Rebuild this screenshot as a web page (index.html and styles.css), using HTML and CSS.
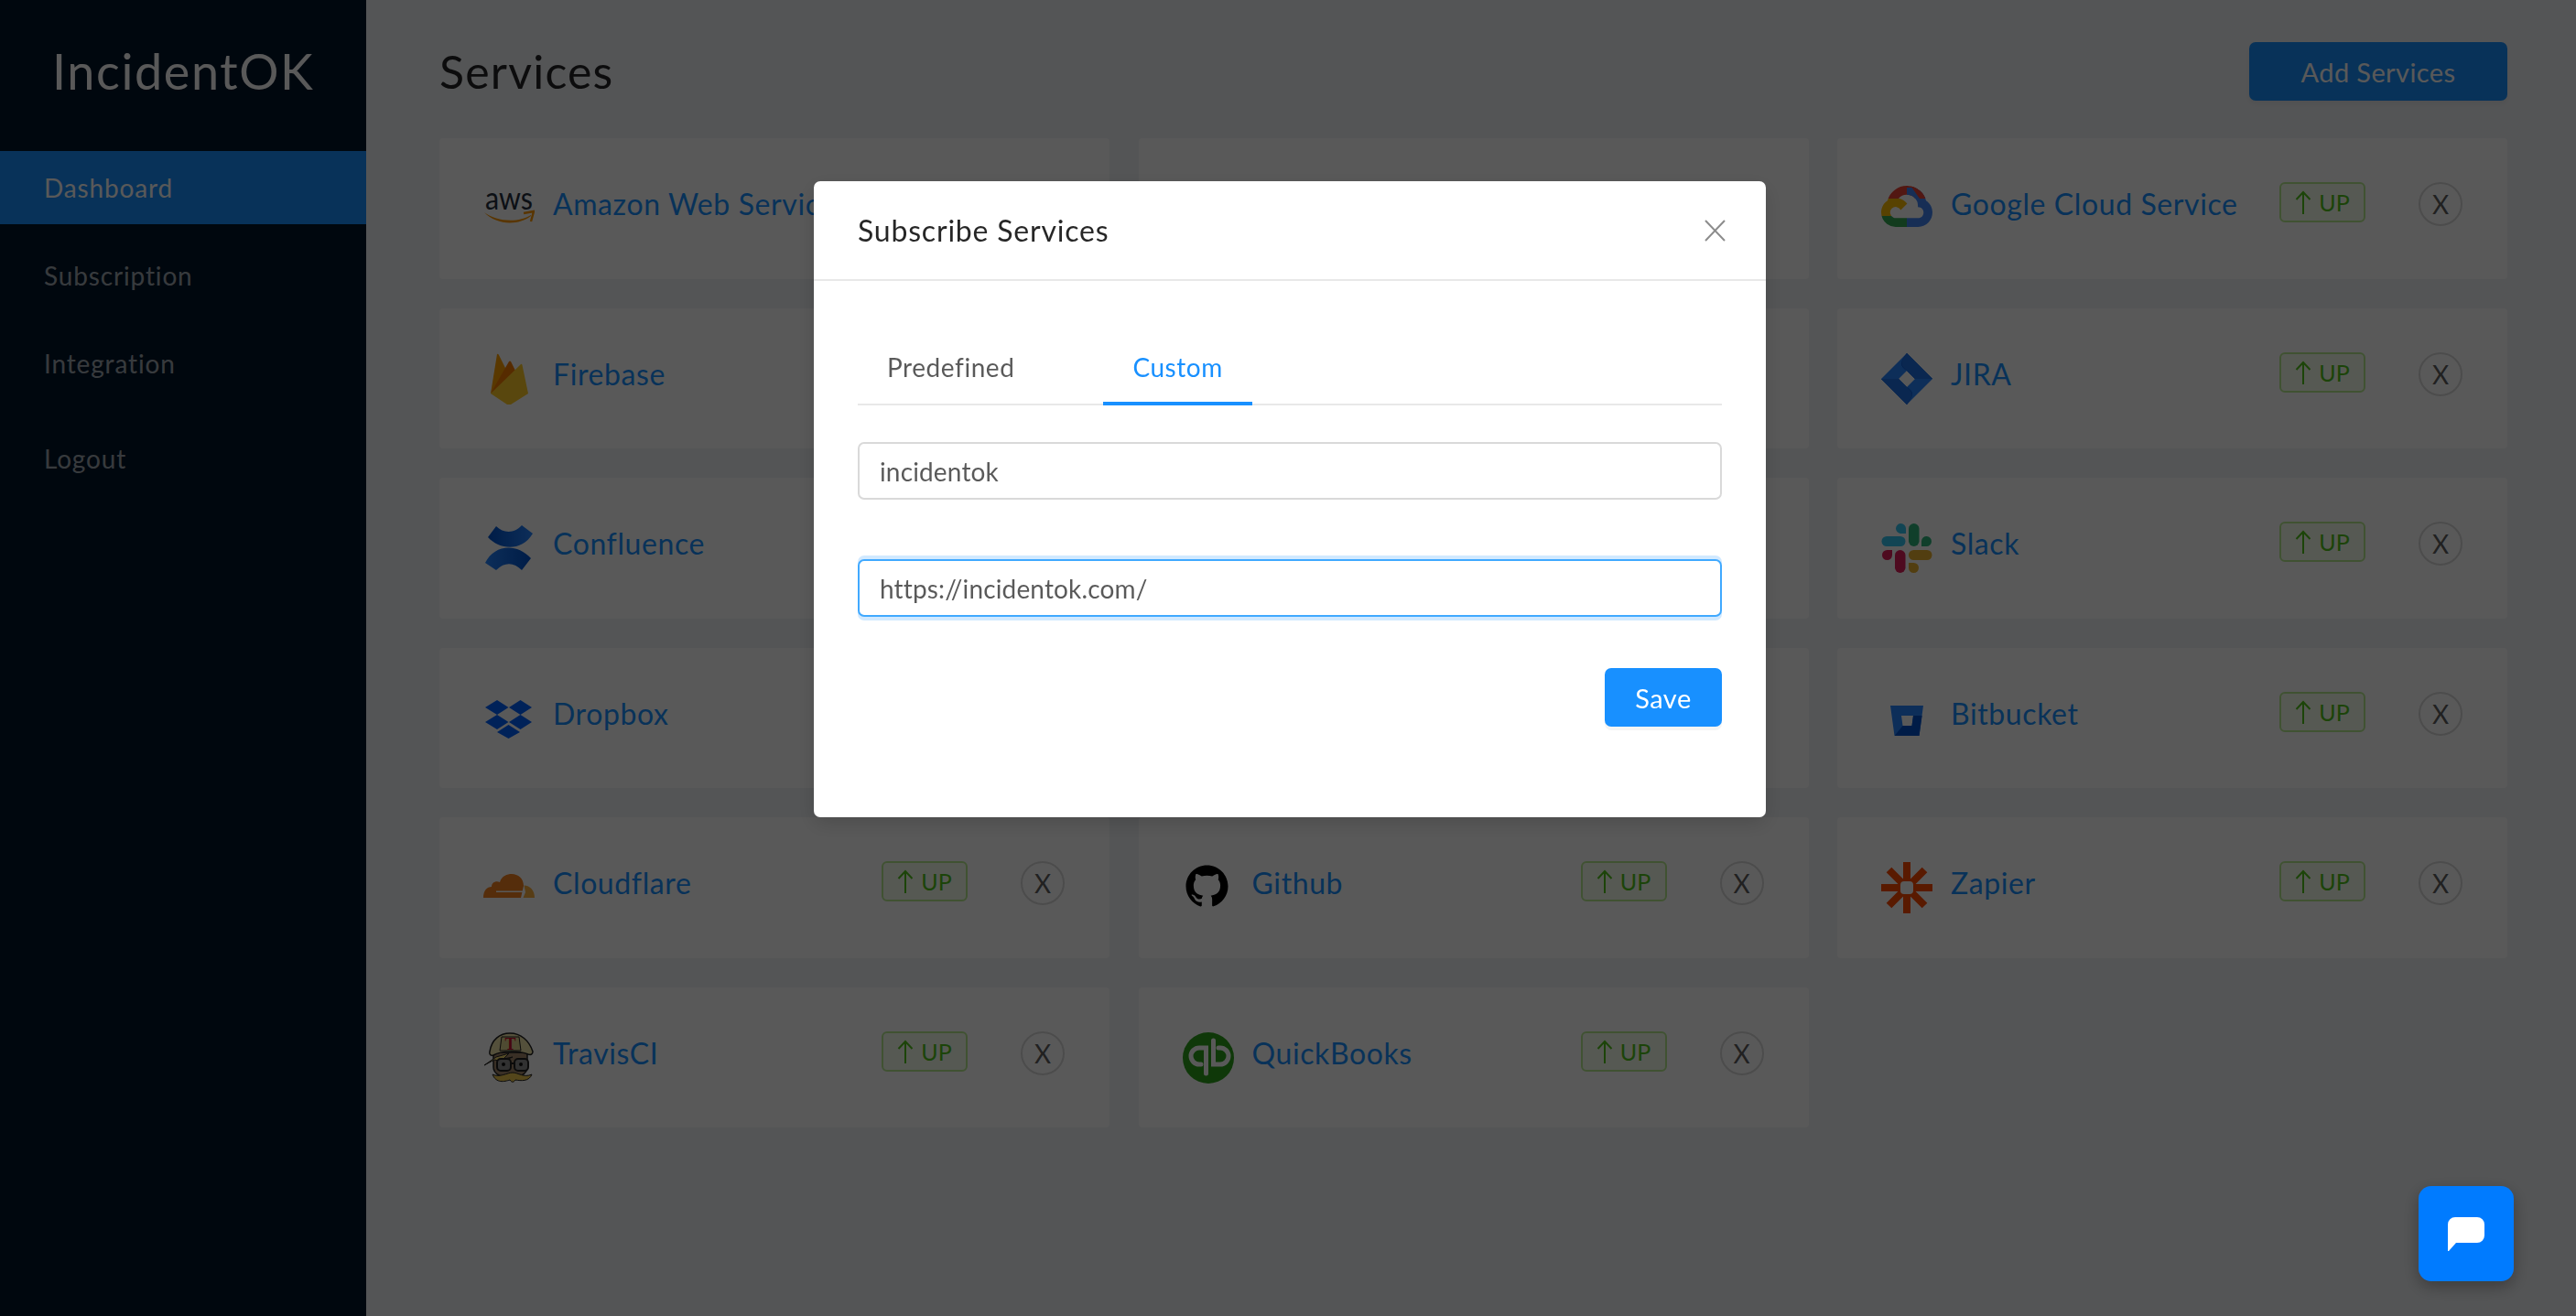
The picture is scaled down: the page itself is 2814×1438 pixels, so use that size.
FILE: index.html
```html
<!DOCTYPE html>
<html lang="en">
<head>
<meta charset="utf-8">
<title>IncidentOK - Services</title>
<link rel="stylesheet" href="styles.css">
</head>
<body>
<div class="app">
  <aside class="sidebar">
    <div class="logo">IncidentOK</div>
    <nav class="menu">
      <a class="menu-item active">Dashboard</a>
      <a class="menu-item">Subscription</a>
      <a class="menu-item">Integration</a>
      <a class="menu-item logout">Logout</a>
    </nav>
  </aside>
  <main class="main">
    <header class="page-head">
      <h1 class="page-title">Services</h1>
      <button class="add-btn">Add Services</button>
    </header>
    <section class="grid">
      <article class="card">
        <svg class="icon" viewBox="0 0 56 56"><text class="aws-text" x="28" y="29" text-anchor="middle" textLength="52" lengthAdjust="spacingAndGlyphs">aws</text><path d="M1 32 C14 42 38 44 52 35 L52 36 C38 47 14 46 1 32Z" fill="#f90"/><path d="M44 33 L55 31 L52 42" fill="none" stroke="#f90" stroke-width="2.4"/></svg>
        <span class="name">Amazon Web Services</span>
        <span class="tag"><svg class="arrow" viewBox="0 0 18 26"><path d="M9 26V2M1.500 10L9 2l7.500 8" fill="none" stroke="currentColor" stroke-width="2"/></svg>UP</span>
        <button class="remove">X</button>
      </article>
      <article class="card"></article>
      <article class="card">
        <svg class="icon" viewBox="0 0 56 56"><defs><clipPath id="gc"><path transform="translate(0 -2.500) scale(2.333)" d="M12.190 2.380a9.344 9.344 0 0 0-9.234 6.893c.053-.02-.055.013 0 0-3.875 2.551-3.922 8.110-.247 10.941l.006-.007-.007.030a6.717 6.717 0 0 0 4.077 1.356h5.173l.030.030h5.192c6.687.053 9.376-8.605 3.835-12.350a9.365 9.365 0 0 0-2.821-4.552l-.043.043.006-.05A9.344 9.344 0 0 0 12.190 2.380zm-.358 4.146c1.244-.04 2.518.368 3.486 1.150a5.186 5.186 0 0 1 1.862 4.078v.518c3.530-.07 3.530 5.262 0 5.193h-5.193l-.008.009v-.04H6.785a2.590 2.590 0 0 1-1.067-.23h.001a2.597 2.597 0 1 1 3.437-3.437l3.013-3.012A6.747 6.747 0 0 0 8.110 8.240c.018-.01.04-.026.054-.023a5.186 5.186 0 0 1 3.670-1.690z"/></clipPath></defs><g clip-path="url(#gc)"><rect width="56" height="17" fill="#ea4335"/><rect x="28" y="17" width="28" height="39" fill="#4285f4"/><rect y="17" width="28" height="19" fill="#fbbc05"/><rect y="36" width="28" height="20" fill="#34a853"/><rect x="28" y="5" width="28" height="12" fill="#4285f4"/><path d="M30 0H56V17H42Z" fill="#ea4335"/></g></svg>
        <span class="name">Google Cloud Service</span>
        <span class="tag"><svg class="arrow" viewBox="0 0 18 26"><path d="M9 26V2M1.500 10L9 2l7.500 8" fill="none" stroke="currentColor" stroke-width="2"/></svg>UP</span>
        <button class="remove">X</button>
      </article>

      <article class="card">
        <svg class="icon" viewBox="0 0 56 56"><path d="M8 44L15 1q1-1 2 1l11 22Z" fill="#ffa000"/><path d="M8 44L28 9q1-1 2 0l7 14Z" fill="#f57c00"/><path d="M8 44L41 12q1-1 1.500 1L49 44 30 56q-2 1-4 0Z" fill="#ffca28"/></svg>
        <span class="name">Firebase</span>
        <span class="tag"><svg class="arrow" viewBox="0 0 18 26"><path d="M9 26V2M1.500 10L9 2l7.500 8" fill="none" stroke="currentColor" stroke-width="2"/></svg>UP</span>
        <button class="remove">X</button>
      </article>
      <article class="card"></article>
      <article class="card">
        <svg class="icon" viewBox="0 0 56 56"><path d="M28 0L56 28 28 56 0 28ZM28 19L19 28 28 37 37 28Z" fill="#2684ff" fill-rule="evenodd"/><path d="M28 0C20 10 20 14 28 19L37 28 56 28ZM28 56C36 46 36 42 28 37L19 28 0 28Z" fill="#0052cc"/><path d="M28 0L56 28 37 28 28 19C20 13 21 9 28 0ZM28 56L0 28 19 28 28 37C36 43 35 47 28 56Z" fill="#1f6fe5"/></svg>
        <span class="name">JIRA</span>
        <span class="tag"><svg class="arrow" viewBox="0 0 18 26"><path d="M9 26V2M1.500 10L9 2l7.500 8" fill="none" stroke="currentColor" stroke-width="2"/></svg>UP</span>
        <button class="remove">X</button>
      </article>

      <article class="card">
        <svg class="icon" viewBox="0 0 56 56"><defs><linearGradient id="cf1" x1="0" x2="1"><stop offset="0" stop-color="#0052cc"/><stop offset="1" stop-color="#2684ff"/></linearGradient><linearGradient id="cf2" x1="1" x2="0"><stop offset="0" stop-color="#0052cc"/><stop offset="1" stop-color="#2684ff"/></linearGradient></defs><path d="M5 16L14 4C22 12 34 12 42 3L54 12C42 32 18 30 5 16Z" fill="url(#cf1)"/><path d="M2 44C12 24 36 22 52 39L42 52C34 44 24 42 14 52Z" fill="url(#cf2)"/></svg>
        <span class="name">Confluence</span>
        <span class="tag"><svg class="arrow" viewBox="0 0 18 26"><path d="M9 26V2M1.500 10L9 2l7.500 8" fill="none" stroke="currentColor" stroke-width="2"/></svg>UP</span>
        <button class="remove">X</button>
      </article>
      <article class="card"></article>
      <article class="card">
        <svg class="icon" viewBox="0 0 56 56"><rect x="30" y="1" width="11.500" height="25" rx="5.750" fill="#2eb67d"/><path d="M44 26V20A5.500 5.500 0 1 1 49.500 26Z" fill="#2eb67d"/><rect x="0.500" y="15" width="26" height="11" rx="5.500" fill="#36c5f0"/><path d="M27 12H21A5.500 5.500 0 1 1 27 6.500Z" fill="#36c5f0"/><rect x="30" y="30" width="25.500" height="11" rx="5.500" fill="#ecb22e"/><path d="M30 44H35.500A5.500 5.500 0 1 1 30 49.500Z" fill="#ecb22e"/><rect x="15" y="30" width="11.500" height="25" rx="5.750" fill="#e01e5a"/><path d="M12 30V35.500A5.500 5.500 0 1 1 6.500 30Z" fill="#e01e5a"/></svg>
        <span class="name">Slack</span>
        <span class="tag"><svg class="arrow" viewBox="0 0 18 26"><path d="M9 26V2M1.500 10L9 2l7.500 8" fill="none" stroke="currentColor" stroke-width="2"/></svg>UP</span>
        <button class="remove">X</button>
      </article>

      <article class="card">
        <svg class="icon" viewBox="0 0 56 56"><path d="M15 8L27.500 16 15 24 2 16ZM40.500 8L53 16 40.500 24 28 16ZM15 24L27.500 32 15 40 2 32ZM40.500 24L53 32 40.500 40 28 32ZM27.500 35L40 43 27.500 50 15 43Z" fill="#0061ff"/></svg>
        <span class="name">Dropbox</span>
        <span class="tag"><svg class="arrow" viewBox="0 0 18 26"><path d="M9 26V2M1.500 10L9 2l7.500 8" fill="none" stroke="currentColor" stroke-width="2"/></svg>UP</span>
        <button class="remove">X</button>
      </article>
      <article class="card"></article>
      <article class="card">
        <svg class="icon" viewBox="0 0 56 56"><path d="M10 14H46L41.500 47H14.500ZM22 25L23.500 36H33.500L35 25Z" fill="#2684ff" fill-rule="evenodd"/><path d="M44.600 25H35L33.500 36H23.500L15 46.500 15 47H41.500Z" fill="#0052cc"/></svg>
        <span class="name">Bitbucket</span>
        <span class="tag"><svg class="arrow" viewBox="0 0 18 26"><path d="M9 26V2M1.500 10L9 2l7.500 8" fill="none" stroke="currentColor" stroke-width="2"/></svg>UP</span>
        <button class="remove">X</button>
      </article>

      <article class="card">
        <svg class="icon" viewBox="0 0 56 56"><path d="M0 39C0 31 4 27 9 27 9 22 14 20 18 22 20 15 26 13 31 13 38 13 44 18 44 26L41 39Z" fill="#f38020"/><path d="M14 31.500H43V33H14Z" fill="#fff"/><path d="M44.500 25.500C51 25.500 56 31 56 39H43.500L46 33Z" fill="#faae40"/></svg>
        <span class="name">Cloudflare</span>
        <span class="tag"><svg class="arrow" viewBox="0 0 18 26"><path d="M9 26V2M1.500 10L9 2l7.500 8" fill="none" stroke="currentColor" stroke-width="2"/></svg>UP</span>
        <button class="remove">X</button>
      </article>
      <article class="card">
        <svg class="icon" viewBox="0 0 56 56"><path transform="translate(3.500 3) scale(1.917)" d="M12 .297c-6.630 0-12 5.373-12 12 0 5.303 3.438 9.800 8.205 11.385.6.113.82-.258.82-.577 0-.285-.01-1.040-.015-2.040-3.338.724-4.042-1.610-4.042-1.610C4.422 18.070 3.633 17.700 3.633 17.700c-1.087-.744.084-.729.084-.729 1.205.084 1.838 1.236 1.838 1.236 1.070 1.835 2.809 1.305 3.495.998.108-.776.417-1.305.76-1.605-2.665-.3-5.466-1.332-5.466-5.930 0-1.310.465-2.380 1.235-3.220-.135-.303-.54-1.523.105-3.176 0 0 1.005-.322 3.300 1.230.96-.267 1.980-.399 3-.405 1.020.006 2.040.138 3 .405 2.280-1.552 3.285-1.230 3.285-1.230.645 1.653.24 2.873.12 3.176.765.84 1.230 1.910 1.230 3.220 0 4.610-2.805 5.625-5.475 5.920.42.36.81 1.096.81 2.220 0 1.606-.015 2.896-.015 3.286 0 .315.21.69.825.57C20.565 22.092 24 17.592 24 12.297c0-6.627-5.373-12-12-12" fill="#000"/></svg>
        <span class="name">Github</span>
        <span class="tag"><svg class="arrow" viewBox="0 0 18 26"><path d="M9 26V2M1.500 10L9 2l7.500 8" fill="none" stroke="currentColor" stroke-width="2"/></svg>UP</span>
        <button class="remove">X</button>
      </article>
      <article class="card">
        <svg class="icon" viewBox="0 0 56 56"><g stroke="#ff4a00" stroke-width="8"><path d="M28 0V56M0 28H56M8.500 8.500L47.500 47.500M47.500 8.500L8.500 47.500"/></g><rect x="21" y="21" width="14" height="14" rx="4" fill="#fff"/></svg>
        <span class="name">Zapier</span>
        <span class="tag"><svg class="arrow" viewBox="0 0 18 26"><path d="M9 26V2M1.500 10L9 2l7.500 8" fill="none" stroke="currentColor" stroke-width="2"/></svg>UP</span>
        <button class="remove">X</button>
      </article>

      <article class="card">
        <svg class="icon" viewBox="0 0 56 56"><path d="M11 22H48V38C48 46 38 50 30 50 21 50 11 46 11 38Z" fill="#a3876a" stroke="#222" stroke-width="1.500"/><path d="M7 21C9 8 18 1 29 1 41 1 50 9 54 21 54 24 52 25 49 24 38 20 20 20 11 25 8 26 6 24 7 21Z" fill="#f0e6a8" stroke="#222" stroke-width="1.500"/><path d="M20 5H39L41 20H18Z" fill="#e3d68f" stroke="#222"/><text class="travis-t" x="29.500" y="19" text-anchor="middle">T</text><path d="M1 36L14 27 28 23 22 29 32 27 21 32 12 30Z" fill="#f7dc6f" stroke="#222"/><rect x="15" y="29" width="15" height="13" rx="4" fill="#8d8d8d" stroke="#222" stroke-width="2"/><rect x="34" y="29" width="15" height="13" rx="4" fill="#8d8d8d" stroke="#222" stroke-width="2"/><path d="M30 34H34" stroke="#222" stroke-width="2"/><circle cx="22" cy="35" r="2" fill="#111"/><circle cx="41" cy="35" r="2" fill="#111"/><path d="M10 46C18 50 26 44 32 44 38 44 44 50 53 46 50 54 41 53 35 52 33 55 31 55 29 52 23 54 14 56 10 46Z" fill="#f0c94d" stroke="#222"/></svg>
        <span class="name">TravisCI</span>
        <span class="tag"><svg class="arrow" viewBox="0 0 18 26"><path d="M9 26V2M1.500 10L9 2l7.500 8" fill="none" stroke="currentColor" stroke-width="2"/></svg>UP</span>
        <button class="remove">X</button>
      </article>
      <article class="card">
        <svg class="icon" viewBox="0 0 56 56"><circle cx="28" cy="28" r="28" fill="#2ca01c"/><path d="M20 35H18A9 9 0 0 1 18 17H25.500V45M33.500 9V35H41A9 9 0 0 0 41 17H39" fill="none" stroke="#fff" stroke-width="5" stroke-linecap="round"/></svg>
        <span class="name">QuickBooks</span>
        <span class="tag"><svg class="arrow" viewBox="0 0 18 26"><path d="M9 26V2M1.500 10L9 2l7.500 8" fill="none" stroke="currentColor" stroke-width="2"/></svg>UP</span>
        <button class="remove">X</button>
      </article>
    </section>
  </main>
</div>

<div class="mask">
  <div class="modal">
    <header class="modal-head">
      <h2 class="modal-title">Subscribe Services</h2>
      <svg class="modal-close" viewBox="0 0 23 24"><path d="M1 1L22 23M22 1L1 23" fill="none" stroke="#8c8c8c" stroke-width="2"/></svg>
    </header>
    <div class="modal-body">
      <div class="tabs">
        <span class="tab">Predefined</span>
        <span class="tab tab-active">Custom</span>
      </div>
      <input class="field" type="text" value="incidentok">
      <input class="field field-focus" type="text" value="https://incidentok.com/">
      <div class="actions"><button class="save-btn">Save</button></div>
    </div>
  </div>
</div>

<button class="chat">
  <svg viewBox="0 0 40 37"><path d="M8 0H32A8 8 0 0 1 40 8V20A8 8 0 0 1 32 28H9L1 37H0V8A8 8 0 0 1 8 0Z" fill="#fff"/></svg>
</button>
</body>
</html>
```

FILE: styles.css
```css
* { box-sizing: border-box; }
html, body { margin: 0; height: 100%; }
body {
  font-family: "Lato", "Noto Sans", sans-serif;
  background: #f0f2f5;
  color: rgba(0, 0, 0, 0.65);
  overflow: hidden;
}
button { font-family: inherit; }

.app { display: flex; height: 1438px; }

.sidebar {
  flex: 0 0 400px;
  background: #001529;
  color: rgba(255, 255, 255, 0.65);
}
.logo {
  height: 165px;
  padding: 0 0 10px 57px;
  display: flex;
  align-items: center;
  font-size: 54px;
  font-weight: 400;
  letter-spacing: 1.6px;
  color: #fff;
}
.menu { display: flex; flex-direction: column; gap: 16px; }
.menu-item {
  height: 80px;
  display: flex;
  align-items: center;
  padding-left: 48px;
  font-size: 28px;
  letter-spacing: 0.85px;
}
.menu-item.active { background: #1890ff; color: #fff; }
.logout { margin-top: 8px; }

.main { flex: 1; padding: 46px 75px 0 80px; }
.page-head {
  display: flex;
  justify-content: space-between;
  align-items: center;
  height: 64px;
  margin-bottom: 41px;
}
.page-title {
  margin: 0;
  font-size: 50px;
  font-weight: 400;
  letter-spacing: 1.2px;
  line-height: 64px;
  color: rgba(0, 0, 0, 0.85);
}
.add-btn {
  width: 282px;
  height: 64px;
  border: 0;
  border-radius: 7px;
  background: #1890ff;
  color: #fff;
  font-size: 29px;
  letter-spacing: 0.4px;
  box-shadow: 0 4px 4px rgba(0, 0, 0, 0.04);
}

.grid {
  display: grid;
  grid-template-columns: repeat(3, 1fr);
  grid-auto-rows: 153.5px;
  gap: 32px 31.5px;
}
.card {
  display: flex;
  align-items: flex-start;
  padding: 48px 49px 0 48px;
  background: #fff;
  border-radius: 4px;
}
.icon { flex: 0 0 56px; width: 56px; height: 56px; margin-top: 1px; }
.aws-text { font-family: "Lato", sans-serif; font-size: 35px; fill: #252f3e; }
.travis-t { font-family: "Liberation Serif", serif; font-size: 18px; font-weight: 700; fill: #c8102e; }
.name {
  margin-left: 20px;
  font-size: 32px;
  line-height: 48px;
  letter-spacing: 0.6px;
  color: #1890ff;
  white-space: nowrap;
}
.tag {
  margin-left: auto;
  width: 94px;
  height: 44px;
  display: flex;
  align-items: center;
  justify-content: center;
  gap: 8px;
  border: 2px solid #b7eb8f;
  border-radius: 6px;
  background: #f6ffed;
  color: #52c41a;
  font-size: 25px;
}
.arrow { width: 18px; height: 26px; }
.remove {
  margin-left: 58px;
  flex: 0 0 48px;
  width: 48px;
  height: 48px;
  padding: 0;
  border: 2px solid #d9d9d9;
  border-radius: 50%;
  background: #fff;
  color: rgba(0, 0, 0, 0.65);
  font-size: 28px;
  font-weight: 400;
}

.mask {
  position: fixed;
  inset: 0;
  background: rgba(0, 0, 0, 0.65);
  display: flex;
  justify-content: center;
  align-items: flex-start;
  padding-left: 4px;
}
.modal {
  width: 1040px;
  height: 695px;
  margin-top: 198px;
  background: #fff;
  border-radius: 7px;
  box-shadow: 0 7px 22px rgba(0, 0, 0, 0.15);
}
.modal-head {
  height: 109px;
  display: flex;
  align-items: center;
  justify-content: space-between;
  padding: 0 44px 0 48px;
  border-bottom: 2px solid #e8e8e8;
}
.modal-title {
  margin: 0;
  font-size: 32px;
  font-weight: 400;
  letter-spacing: 0.8px;
  color: rgba(0, 0, 0, 0.85);
}
.modal-close { width: 23px; height: 24px; }
.modal-body { padding: 0 48px; display: flex; flex-direction: column; }
.tabs {
  display: flex;
  gap: 65px;
  height: 136px;
  margin-bottom: 40px;
  border-bottom: 2px solid #e8e8e8;
  align-items: flex-end;
}
.tab {
  padding: 0 32px;
  height: 64px;
  font-size: 28px;
  line-height: 44px;
  letter-spacing: 0.55px;
  margin-bottom: -2px;
}
.tab-active { color: #1890ff; border-bottom: 4px solid #1890ff; }
.field {
  width: 100%;
  height: 63px;
  padding: 0 22px;
  border: 2px solid #d9d9d9;
  border-radius: 7px;
  background: #fff;
  font-family: inherit;
  font-size: 28px;
  letter-spacing: 0.15px;
  color: rgba(0, 0, 0, 0.65);
  outline: 0;
}
.field-focus {
  margin-top: 65px;
  border-color: #40a9ff;
  box-shadow: 0 -4px 0 rgba(24, 144, 255, 0.2), 0 4px 0 rgba(24, 144, 255, 0.2);
}
.actions { display: flex; justify-content: flex-end; margin-top: 56px; }
.save-btn {
  width: 128px;
  height: 64px;
  border: 0;
  border-radius: 7px;
  background: #1890ff;
  color: #fff;
  font-size: 29px;
  letter-spacing: 0.5px;
  box-shadow: 0 4px 0 rgba(0, 0, 0, 0.04);
}

.chat {
  position: fixed;
  left: 2642px;
  top: 1296px;
  width: 104px;
  height: 104px;
  display: flex;
  align-items: center;
  justify-content: center;
  padding: 0;
  border: 0;
  border-radius: 14px;
  background: #007bff;
  box-shadow: 0 6px 18px rgba(0, 0, 0, 0.3);
}
.chat svg { width: 40px; height: 37px; }
```
